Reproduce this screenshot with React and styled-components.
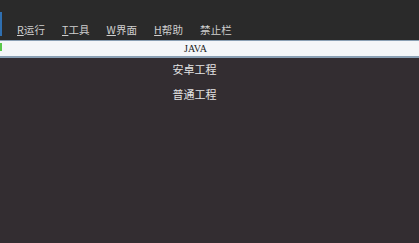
import React from "react";
import styled, { createGlobalStyle } from "styled-components";

const Global = createGlobalStyle`
  html, body {
    margin: 0;
    padding: 0;
    background: #332d31;
  }
  #root {
    min-height: 243px;
  }
`;

const menus = [
  { key: "R", label: "运行" },
  { key: "T", label: "工具" },
  { key: "W", label: "界面" },
  { key: "H", label: "帮助" },
  { key: "", label: "禁止栏" },
];

const projects = ["安卓工程", "普通工程"];

export default function App() {
  return (
    <>
      <Global />
      <Page>
        <MenuBar>
          <Accent />
          <MenuList>
            {menus.map((m) => (
              <MenuItem key={m.label}>
                {m.key && <u>{m.key}</u>}
                {m.label}
              </MenuItem>
            ))}
          </MenuList>
        </MenuBar>
        <TabBar>
          <GreenMark />
          <TabTitle>JAVA</TabTitle>
        </TabBar>
        <ProjectList>
          {projects.map((p) => (
            <Project key={p}>{p}</Project>
          ))}
        </ProjectList>
      </Page>
    </>
  );
}

const Page = styled.div`
  width: 419px;
  height: 243px;
  display: flex;
  flex-direction: column;
  background: #332d31;
  font-family: "Noto Sans CJK SC", "Liberation Sans", sans-serif;
`;

const MenuBar = styled.div`
  height: 40px;
  background: #2a2a2a;
  display: flex;
  align-items: flex-end;
  position: relative;
`;

const Accent = styled.div`
  position: absolute;
  left: 0;
  top: 12px;
  width: 2px;
  height: 24px;
  background: #2f6fb0;
`;

const MenuList = styled.div`
  display: flex;
  padding-left: 17px;
  padding-bottom: 3px;
`;

const MenuItem = styled.span`
  font-size: 10.5px;
  line-height: 14px;
  color: #cfcfcf;
  margin-right: 17px;
  letter-spacing: 0.1px;
  u {
    text-decoration: underline;
    text-underline-offset: 1px;
  }
`;

const TabBar = styled.div`
  height: 15px;
  background: #f4f6f8;
  border-top: 1px solid #8aa0b4;
  border-bottom: 2px solid #8aa0b4;
  display: flex;
  align-items: center;
  justify-content: center;
  position: relative;
`;

const GreenMark = styled.div`
  position: absolute;
  left: 0;
  top: 2px;
  width: 2px;
  height: 8px;
  background: #59c84a;
`;

const TabTitle = styled.span`
  font-family: "Liberation Serif", serif;
  font-size: 10px;
  color: #222;
  transform: translateX(-14px);
`;

const ProjectList = styled.div`
  display: flex;
  flex-direction: column;
  align-items: center;
  gap: 8px;
  padding-top: 3px;
  padding-right: 30px;
`;

const Project = styled.div`
  font-size: 11px;
  line-height: 17px;
  color: #e4e4e4;
`;
